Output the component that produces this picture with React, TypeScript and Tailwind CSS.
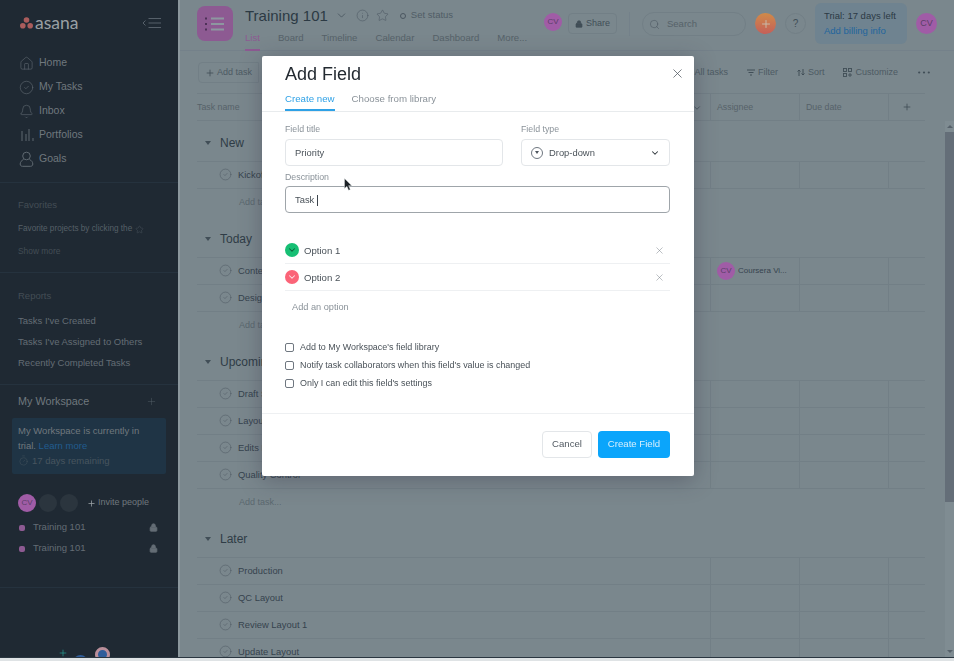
import React from 'react';
import { Bell, ChevronDown, CircleCheck, House, Info, Lock, Plus, Search, Star, Timer, X } from 'lucide-react';

const FONT = "font-['Liberation_Sans',Arial,sans-serif]";

interface Section {
  title: string;
  tasks: string[];
  addRow: boolean;
}

const sections: Section[] = [
  { title: 'New', tasks: ['Kickoff Meeting'], addRow: true },
  { title: 'Today', tasks: ['Content Review', 'Design Review'], addRow: true },
  { title: 'Upcoming', tasks: ['Draft Script', 'Layout Draft', 'Edits Round 1', 'Quality Control'], addRow: true },
  { title: 'Later', tasks: ['Production', 'QC Layout', 'Review Layout 1', 'Update Layout'], addRow: false },
];

const tabs = ['List', 'Board', 'Timeline', 'Calendar', 'Dashboard', 'More...'];

// --- Small shared bits ---
const Avatar = ({ size = 'w-[21px] h-[21px]', text = 'text-[9px]' }: { size?: string; text?: string }) => (
  <div className={`${size} ${text} shrink-0 rounded-full bg-[#a05ca6] text-[#5a3f68] flex items-center justify-center`}>CV</div>
);

const PortfolioIcon = () => (
  <svg width="14" height="14" viewBox="0 0 14 14" fill="none" stroke="#5f6971" strokeWidth="1">
    <path d="M2 3v10M6 6v7M9 1v12M13 10v3" />
  </svg>
);

const GoalsIcon = () => (
  <svg width="15" height="16" viewBox="0 0 15 16" fill="none" stroke="#5f6971" strokeWidth="1">
    <circle cx="7.5" cy="5" r="3.8" />
    <path d="M4.5 8.5C2.5 9.5 1.2 11 1.2 13c0 1.6 1 2.3 2.3 2.3h8c1.3 0 2.3-.7 2.3-2.3 0-2-1.3-3.5-3.3-4.5" />
  </svg>
);

// --- Sidebar ---
const Sidebar = () => {
  const nav = [
    { label: 'Home', icon: <House size={15} strokeWidth={1} color="#5f6971" /> },
    { label: 'My Tasks', icon: <CircleCheck size={15} strokeWidth={1} color="#5f6971" /> },
    { label: 'Inbox', icon: <Bell size={15} strokeWidth={1} color="#5f6971" /> },
    { label: 'Portfolios', icon: <PortfolioIcon /> },
    { label: 'Goals', icon: <GoalsIcon /> },
  ];

  return (
    <aside className="w-[180px] shrink-0 h-full bg-[#1f2933] border-r-2 border-[#8b979d] flex flex-col overflow-hidden">
      <div className="h-[50px] shrink-0 flex items-center pl-[20px] pr-[16px] pb-[4px]">
        <svg width="13" height="12" viewBox="0 0 13 12" fill="#a95c5c">
          <circle cx="6.5" cy="3" r="2.8" />
          <circle cx="2.8" cy="8.8" r="2.8" />
          <circle cx="10.2" cy="8.8" r="2.8" />
        </svg>
        <span className="ml-[2px] text-[17.5px] leading-none text-[#9aa0a4] font-['Lato',sans-serif]">asana</span>
        <svg className="ml-auto" width="20" height="12" viewBox="0 0 20 12" fill="none" stroke="#56606a" strokeWidth="1">
          <path d="M3.5 3.5L1 6l2.5 2.5M6.5 1.5H19M6.5 6H19M6.5 10.5H19" />
        </svg>
      </div>
      <nav className="flex flex-col pl-[19px] pt-[1px] pb-[11px] border-b border-[#25323e]">
        {nav.map((item) => (
          <div key={item.label} className="h-[24px] flex items-center gap-[5px] text-[10.5px] text-[#70787e]">
            <span className="w-[15px] flex justify-center">{item.icon}</span>
            {item.label}
          </div>
        ))}
      </nav>
      <div className="h-[90px] shrink-0 px-[18px] pt-[15px] border-b border-[#25323e] text-[#434d55]">
        <div className="text-[9.5px] leading-[14px]">Favorites</div>
        <div className="mt-[10px] text-[8.2px] leading-[14px] text-[#566068] flex items-center gap-[3px]">
          Favorite projects by clicking the <Star size={9} strokeWidth={1} />
        </div>
        <div className="mt-[8px] text-[8.4px] leading-[14px]">Show more</div>
      </div>
      <div className="h-[112px] shrink-0 px-[18px] pt-[16px] border-b border-[#25323e] text-[#646d75]">
        <div className="text-[9.5px] leading-[14px] text-[#434d55]">Reports</div>
        <div className="mt-[11px] flex flex-col gap-[7px] text-[9.5px] leading-[14px]">
          <div>Tasks I've Created</div>
          <div>Tasks I've Assigned to Others</div>
          <div>Recently Completed Tasks</div>
        </div>
      </div>
      <div className="px-[18px] pt-[8px] flex items-center justify-between text-[10.8px] leading-[16px] text-[#70787e]">
        My Workspace
        <Plus size={11} strokeWidth={1} color="#56606a" className="mr-[3px]" />
      </div>
      <div className="mx-[12px] mt-[9px] h-[56px] shrink-0 bg-[#1f3445] rounded-[2px] px-[6px] pt-[5px] text-[9.5px] leading-[15px] text-[#70787e]">
        <div>My Workspace is currently in</div>
        <div>trial. <span className="text-[#215c8f]">Learn more</span></div>
        <div className="flex items-center gap-[3px] text-[#47555f]">
          <Timer size={11} strokeWidth={1} /> 17 days remaining
        </div>
      </div>
      <div className="mt-[20px] pl-[18px] flex items-center gap-[3px]">
        <Avatar size="w-[18px] h-[18px]" text="text-[8px]" />
        <div className="w-[18px] h-[18px] rounded-full bg-[#2b353e]" />
        <div className="w-[18px] h-[18px] rounded-full bg-[#2b353e]" />
        <div className="ml-[6px] flex items-center gap-[2px] text-[9px] text-[#70787e]">
          <Plus size={9} strokeWidth={2} color="#9ea4a8" /> Invite people
        </div>
      </div>
      <div className="mt-[5px] pl-[19px] pr-[20px] flex flex-col pb-[28px] border-b border-[#25323e]">
        {[0, 1].map((i) => (
          <div key={i} className="h-[21px] flex items-center text-[9.5px] text-[#646d75]">
            <span className="w-[6px] h-[6px] rounded-[2px] bg-[#8d5a92] mr-[8px]" />
            Training 101
            <Lock size={9} className="ml-auto" color="#646d75" fill="#646d75" />
          </div>
        ))}
      </div>
      <div className="mt-[60px] flex items-start pl-[58px]">
        <Plus size={10} strokeWidth={1.5} color="#26a69a" />
        <div className="w-[15px] h-[15px] mt-[7px] ml-[5px] rounded-full bg-[#2f5d9a]" />
        <div className="w-[15px] h-[15px] -mt-[1px] ml-[7px] rounded-full border-[3px] border-[#b98e9a] bg-[#2f5d9a]" />
        <div className="w-[2px] h-[2px] mt-[11px] ml-[14px] rounded-full bg-[#26a69a]" />
      </div>
    </aside>
  );
};

// --- Top header ---
const TopBar = () => (
  <header className="h-[51px] shrink-0 flex border-b border-[#74818a]">
    <div className="ml-[17px] mt-[6px] w-[36px] h-[35px] rounded-[8px] bg-[#8d5a92] flex items-center justify-center">
      <svg width="20" height="14" viewBox="0 0 20 14" fill="none" strokeWidth="2">
        <path d="M0 1.5h2M0 7h2M0 12.5h2" stroke="#4e3158" />
        <path d="M6 1.5h13M6 7h13M6 12.5h13" stroke="#8d97a0" />
      </svg>
    </div>
    <div className="ml-[12px] w-[295px]">
      <div className="h-[31px] flex items-center text-[#2c3a44]">
        <span className="text-[15px] leading-none">Training 101</span>
        <ChevronDown size={13} strokeWidth={1} className="ml-[7px]" />
        <Info size={13} strokeWidth={1} className="ml-[8px]" color="#4a5660" />
        <Star size={13} strokeWidth={1} className="ml-[7px]" color="#4a5660" />
        <span className="ml-[11px] w-[6px] h-[6px] rounded-full border border-[#4a5660]" />
        <span className="ml-[5px] text-[9.5px] text-[#505d66]">Set status</span>
      </div>
      <div className="flex h-[19px] gap-[18px] text-[9.6px]">
        {tabs.map((tab, i) => (
          <div
            key={tab}
            className={i === 0 ? 'h-[20px] leading-[13px] text-[#8d5a92] border-b-2 border-[#8d5a92]' : 'leading-[13px] text-[#566269]'}
          >
            {tab}
          </div>
        ))}
      </div>
    </div>
    <div className="ml-[4px] mt-[13px] flex items-start">
      <Avatar size="w-[18px] h-[18px]" text="text-[8px]" />
      <div className="ml-[6px] w-[49px] h-[21px] rounded-[4px] border border-[#727f86] flex items-center justify-center gap-[3px] text-[9px] text-[#414e57]">
        <Lock size={8} fill="#414e57" /> Share
      </div>
    </div>
    <div className="ml-[12px] mt-[12px] w-px h-[24px] bg-[#74818a]" />
    <div className="ml-[12px] mt-[12px] w-[104px] h-[24px] rounded-full border border-[#727f86] flex items-center pl-[6px] text-[9.5px] text-[#566269]">
      <Search size={11} strokeWidth={1} color="#414e57" />
      <span className="ml-[7px]">Search</span>
    </div>
    <div className="ml-[9px] mt-[13px] w-[21px] h-[21px] rounded-full bg-gradient-to-b from-[#d08a48] to-[#c45f58] flex items-center justify-center">
      <Plus size={12} color="#c9b9a8" />
    </div>
    <div className="ml-[9px] mt-[13px] w-[21px] h-[21px] rounded-full border border-[#727f86] flex items-center justify-center text-[10px] text-[#414e57]">?</div>
    <div className="ml-[9px] mt-[3px] w-[92px] h-[41px] rounded-[6px] bg-[#6f8390] pl-[9px] pt-[5px] text-[9.5px] leading-[15px]">
      <div className="text-[#2c3a44]">Trial: 17 days left</div>
      <div className="text-[#22659d]">Add billing info</div>
    </div>
    <div className="ml-[9px] mt-[13px]">
      <Avatar />
    </div>
  </header>
);

// --- Toolbar and column titles ---
const Toolbar = () => (
  <div className="h-[42px] shrink-0 flex items-center pl-[18px] pr-[24px] pt-[1px] text-[9px] text-[#4d5a63]">
    <div className="h-[21px] w-[61px] rounded-l-[4px] border border-[#727f86] flex items-center justify-center gap-[2px]">
      <Plus size={10} color="#414e57" /> Add task
    </div>
    <div className="ml-auto flex items-center">
      <span>All tasks</span>
      <span className="ml-[19px] flex items-center gap-[3px]">
        <svg width="8" height="7" viewBox="0 0 8 7" stroke="#414e57" strokeWidth="1">
          <path d="M0 1h8M1.5 3.5h5M3 6h2" />
        </svg>
        Filter
      </span>
      <span className="ml-[19px] flex items-center gap-[3px]">
        <svg width="8" height="7" viewBox="0 0 8 7" fill="none" stroke="#414e57" strokeWidth="1">
          <path d="M2 7V1M.5 2.5L2 1l1.5 1.5M6 0v6M4.5 4.5L6 6l1.5-1.5" />
        </svg>
        Sort
      </span>
      <span className="ml-[19px] flex items-center gap-[3px]">
        <svg width="9" height="9" viewBox="0 0 9 9" fill="none" stroke="#414e57" strokeWidth="0.9">
          <rect x="0.5" y="0.5" width="3" height="3" />
          <rect x="5.5" y="0.5" width="3" height="3" />
          <rect x="0.5" y="5.5" width="3" height="3" />
          <path d="M7 5v4M5 7h4" />
        </svg>
        Customize
      </span>
      <svg className="ml-[20px]" width="12" height="3" viewBox="0 0 12 3" fill="#414e57">
        <circle cx="1.2" cy="1.5" r="1.1" />
        <circle cx="6" cy="1.5" r="1.1" />
        <circle cx="10.8" cy="1.5" r="1.1" />
      </svg>
    </div>
  </div>
);

const ColumnHeader = () => (
  <div className="h-[28px] shrink-0 ml-[17px] mr-[29px] flex items-center border-y border-[#727f86] text-[8.8px] text-[#566269]">
    <div className="w-[513px] flex items-center justify-between pr-[8px] pt-[1px]">
      Task name
      <ChevronDown size={10} color="#414e57" />
    </div>
    <div className="w-[89px] h-full border-l border-[#727f86] pl-[6px] pt-[1px] flex items-center">Assignee</div>
    <div className="w-[89px] h-full border-l border-[#727f86] pl-[6px] pt-[1px] flex items-center">Due date</div>
    <div className="w-[37px] h-full border-l border-[#727f86] flex items-center justify-center">
      <Plus size={10} color="#414e57" />
    </div>
  </div>
);

// --- Task sections ---
const TaskRow = ({ name }: { name: string }) => (
  <div className="h-[27px] flex items-center border-b border-[#727f86]">
    <div className="w-[513px] flex items-center pl-[22px] gap-[6px] text-[9.4px] text-[#36434d]">
      <CircleCheck size={13} strokeWidth={0.9} color="#4a5660" />
      {name}
    </div>
    <div className="w-[89px] h-full border-l border-[#727f86] pl-[6px] flex items-center gap-[3px] text-[8px] text-[#36434d]">
      {name === 'Content Review' && (
        <>
          <Avatar size="w-[18px] h-[18px]" text="text-[8px]" />
          Coursera Vi...
        </>
      )}
    </div>
    <div className="w-[89px] h-full border-l border-[#727f86]" />
    <div className="w-[37px] h-full border-l border-[#727f86]" />
  </div>
);

const TaskSection = ({ section }: { section: Section }) => (
  <section>
    <div className="h-[41px] flex items-center pt-[3px] pl-[8px] border-b border-[#727f86]">
      <span className="w-0 h-0 border-x-[3.5px] border-x-transparent border-t-[4px] border-t-[#414e57]" />
      <span className="ml-[9px] text-[12px] text-[#2f3c46]">{section.title}</span>
    </div>
    {section.tasks.map((task) => (
      <TaskRow key={task} name={task} />
    ))}
    {section.addRow && <div className="h-[28px] flex items-center pl-[42px] text-[9px] text-[#5a676f]">Add task...</div>}
  </section>
);

const Scrollbar = () => (
  <div className="w-[9px] h-full shrink-0 bg-[#7f8c92] flex flex-col items-center">
    <div className="h-[11px] flex items-center">
      <span className="w-0 h-0 border-x-[3px] border-x-transparent border-b-[3px] border-b-[#56616a]" />
    </div>
    <div className="w-full h-[370px] bg-[#646e78]" />
    <div className="mt-auto h-[12px] flex items-center">
      <span className="w-0 h-0 border-x-[3px] border-x-transparent border-t-[3px] border-t-[#56616a]" />
    </div>
  </div>
);

// --- Add Field dialog ---
const OptionRow = ({ label, bg, arrow }: { label: string; bg: string; arrow: string }) => (
  <div className="h-[27px] flex items-center border-b border-[#eef0f2]">
    <span className={`w-[14px] h-[14px] rounded-full ${bg} flex items-center justify-center`}>
      <ChevronDown size={10} strokeWidth={2.5} color={arrow} />
    </span>
    <span className="ml-[5px] pt-[2px] text-[9.6px] text-[#4a5259]">{label}</span>
    <X size={11} strokeWidth={1} color="#6f7780" className="ml-auto mr-[5px]" />
  </div>
);

const CheckRow = ({ label }: { label: string }) => (
  <div className="h-[18px] flex items-center gap-[6px] text-[8.95px] text-[#4a5259]">
    <span className="w-[9px] h-[9px] rounded-[2px] border border-[#6f7780]" />
    <span className="pt-[1px]">{label}</span>
  </div>
);

const AddFieldDialog = () => (
  <div className="fixed inset-0 flex justify-center items-start pt-[56px] pl-[2px]">
    <div className="w-[432px] h-[420px] bg-white rounded-[2px] shadow-[0_4px_22px_rgba(45,40,60,0.35)] flex flex-col relative">
      <div className="h-[56px] shrink-0 px-[23px] border-b border-[#e8ebed]">
        <div className="pt-[7px] text-[18px] leading-[22px] text-[#232a31]">Add Field</div>
        <div className="mt-[7px] flex gap-[17px] text-[9.7px]">
          <div className="h-[19px] leading-[13px] text-[#2ea1e6] border-b-2 border-[#2ea1e6]">Create new</div>
          <div className="leading-[13px] text-[#8a9299]">Choose from library</div>
        </div>
      </div>
      <X size={15} strokeWidth={1.2} color="#4e565e" className="absolute right-[9px] top-[10px]" />

      <div className="flex-1 pl-[23px] pr-[24px] pt-[11px]">
        <div className="flex gap-[18px]">
          <div className="w-[218px]">
            <div className="text-[8.8px] leading-[12px] text-[#8a9299]">Field title</div>
            <div className="mt-[4px] h-[27px] rounded-[4px] border border-[#e3e6e9] px-[9px] pt-[2px] flex items-center text-[9.4px] text-[#4a5259]">Priority</div>
          </div>
          <div className="w-[149px]">
            <div className="text-[8.8px] leading-[12px] text-[#8a9299]">Field type</div>
            <div className="mt-[4px] h-[27px] rounded-[4px] border border-[#e3e6e9] px-[9px] flex items-center text-[9.4px] text-[#4a5259]">
              <span className="w-[12px] h-[12px] rounded-full border border-[#6f7780] flex items-center justify-center">
                <span className="w-0 h-0 border-x-[2.5px] border-x-transparent border-t-[3px] border-t-[#4e565e]" />
              </span>
              <span className="ml-[6px] pt-[2px]">Drop-down</span>
              <ChevronDown size={10} strokeWidth={2.5} color="#2c3339" className="ml-auto" />
            </div>
          </div>
        </div>
        <div className="mt-[5px] text-[8.8px] leading-[12px] text-[#8a9299]">Description</div>
        <div className="mt-[3px] h-[27px] rounded-[4px] border border-[#9fa5aa] px-[9px] pt-[2px] flex items-center text-[9.4px] text-[#4a5259]">
          Task
          <span className="ml-[3px] w-px h-[11px] bg-[#3c444c]" />
        </div>

        <div className="mt-[24px]">
          <OptionRow label="Option 1" bg="bg-[#17bf74]" arrow="#0b5e3a" />
          <OptionRow label="Option 2" bg="bg-[#fb6478]" arrow="#fde3e7" />
          <div className="h-[31px] pl-[7px] pt-[3px] flex items-center text-[9.2px] text-[#8a9299]">Add an option</div>
        </div>

        <div className="mt-[16px] flex flex-col">
          <CheckRow label="Add to My Workspace's field library" />
          <CheckRow label="Notify task collaborators when this field's value is changed" />
          <CheckRow label="Only I can edit this field's settings" />
        </div>
      </div>

      <div className="h-[63px] shrink-0 border-t border-[#eef0f2] px-[24px] flex items-start justify-end gap-[6px] pt-[17px] text-[9.6px]">
        <div className="w-[50px] h-[27px] rounded-[4px] border border-[#e3e6e9] flex items-center justify-center text-[#525a62]">Cancel</div>
        <div className="w-[72px] h-[27px] rounded-[4px] bg-[#0ba5fb] flex items-center justify-center text-[#d7effd]">Create Field</div>
      </div>
    </div>

    {/* mouse pointer from the capture */}
    <svg className="absolute left-[344px] top-[178px]" width="9" height="13" viewBox="0 0 9 13" fill="#1c2126" stroke="#eceff1" strokeWidth="0.4">
      <path d="M.5.5v10l2.4-2.2 1.7 4 1.7-.7-1.7-3.9h3.2z" />
    </svg>
  </div>
);

export default function App() {
  return (
    <div className={`${FONT} w-[954px] h-[661px] overflow-hidden flex flex-col bg-[#dfe3e5]`}>
      <div className="h-[658px] shrink-0 flex overflow-hidden border-b border-[#2a3640]">
        <Sidebar />
        <main className="flex-1 min-w-0 h-full flex flex-col bg-[#7a878d] overflow-hidden">
          <TopBar />
          <Toolbar />
          <ColumnHeader />
          <div className="flex-1 min-h-0 flex">
            <div className="flex-1 min-w-0 overflow-hidden ml-[17px] mr-[20px]">
              {sections.map((section) => (
                <TaskSection key={section.title} section={section} />
              ))}
            </div>
            <Scrollbar />
          </div>
        </main>
      </div>
      <AddFieldDialog />
    </div>
  );
}
